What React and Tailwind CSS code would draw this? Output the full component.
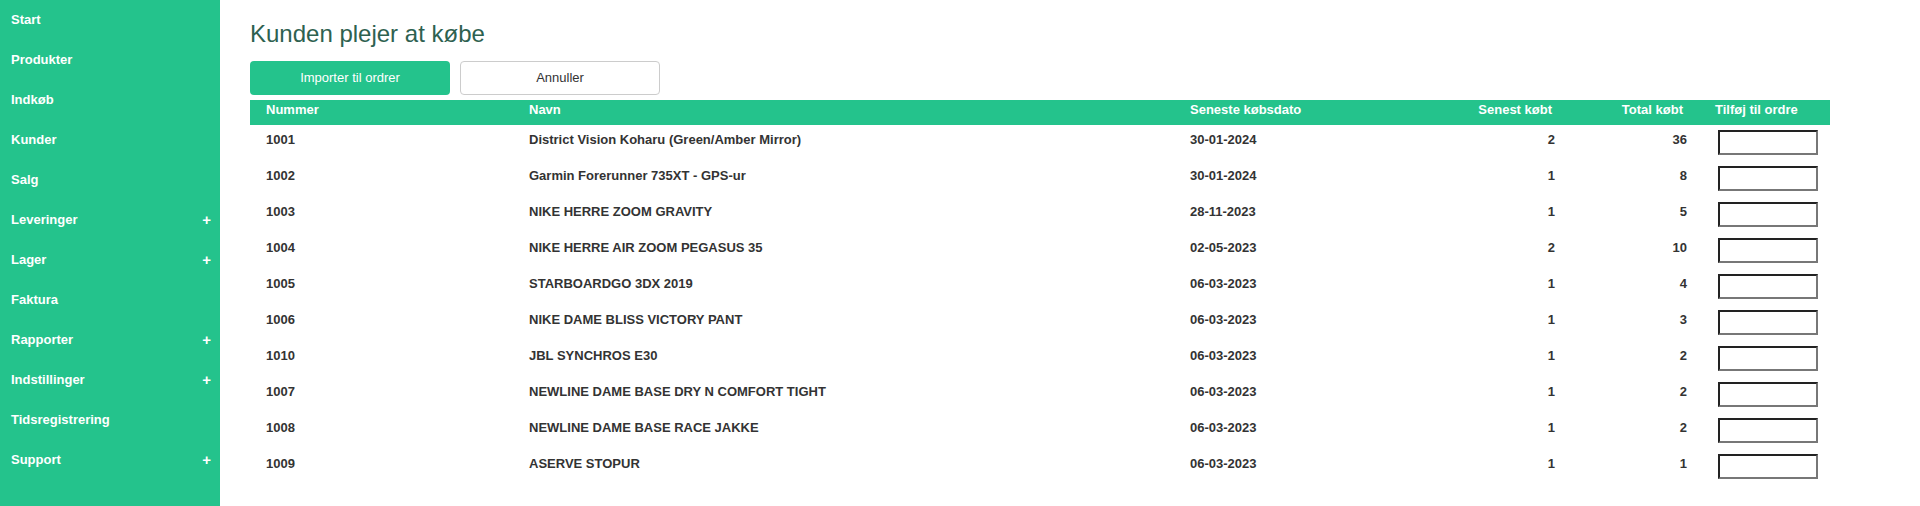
import React from "react";

const menu = [
  { label: "Start" },
  { label: "Produkter" },
  { label: "Indkøb" },
  { label: "Kunder" },
  { label: "Salg" },
  { label: "Leveringer", sub: true },
  { label: "Lager", sub: true },
  { label: "Faktura" },
  { label: "Rapporter", sub: true },
  { label: "Indstillinger", sub: true },
  { label: "Tidsregistrering" },
  { label: "Support", sub: true },
];

const rows = [
  ["1001", "District Vision Koharu (Green/Amber Mirror)", "30-01-2024", 2, 36],
  ["1002", "Garmin Forerunner 735XT - GPS-ur", "30-01-2024", 1, 8],
  ["1003", "NIKE HERRE ZOOM GRAVITY", "28-11-2023", 1, 5],
  ["1004", "NIKE HERRE AIR ZOOM PEGASUS 35", "02-05-2023", 2, 10],
  ["1005", "STARBOARDGO 3DX 2019", "06-03-2023", 1, 4],
  ["1006", "NIKE DAME BLISS VICTORY PANT", "06-03-2023", 1, 3],
  ["1010", "JBL SYNCHROS E30", "06-03-2023", 1, 2],
  ["1007", "NEWLINE DAME BASE DRY N COMFORT TIGHT", "06-03-2023", 1, 2],
  ["1008", "NEWLINE DAME BASE RACE JAKKE", "06-03-2023", 1, 2],
  ["1009", "ASERVE STOPUR", "06-03-2023", 1, 1],
];

const cols = "grid grid-cols-[263px_661px_226px_171px_128px_131px]";

const App = () => {
  return (
    <div className="flex min-h-[506px] bg-white font-['Liberation_Sans',Arial,sans-serif]">
      <aside className="w-[220px] shrink-0 bg-[#24c38c]">
        {menu.map((item) => (
          <div
            key={item.label}
            className="flex h-10 items-center justify-between pb-[2px] pl-[11px] pr-[9px] text-[13px] leading-[15px] font-bold text-white"
          >
            <span>{item.label}</span>
            {item.sub && <span className="text-[15px]">+</span>}
          </div>
        ))}
      </aside>

      <main className="flex-1 pl-[30px]">
        <h1 className="mt-[22px] text-[24px] leading-[24px] text-[#2e6150]">Kunden plejer at købe</h1>

        <div className="mt-[15px] flex gap-[10px]">
          <button className="h-[34px] w-[200px] rounded bg-[#24c38c] text-[13px] text-white">
            Importer til ordrer
          </button>
          <button className="h-[34px] w-[200px] rounded border border-[#cccccc] bg-white text-[13px] text-[#333]">
            Annuller
          </button>
        </div>

        <div className="mt-[5px] w-[1580px]">
          <div className={`${cols} h-[25px] bg-[#24c38c] pt-[2px] text-[13px] leading-[15px] font-bold text-white`}>
            <div className="pl-4">Nummer</div>
            <div className="pl-4">Navn</div>
            <div className="pl-4">Seneste købsdato</div>
            <div className="pr-[19px] text-right">Senest købt</div>
            <div className="pr-4 text-right">Total købt</div>
            <div className="pl-4">Tilføj til ordre</div>
          </div>

          {rows.map((r) => (
            <div key={r[0]} className={`${cols} h-9 text-[13px] leading-[15px] font-bold text-[#333]`}>
              <div className="pl-4 pt-[7px]">{r[0]}</div>
              <div className="pl-4 pt-[7px]">{r[1]}</div>
              <div className="pl-4 pt-[7px]">{r[2]}</div>
              <div className="pr-4 pt-[7px] text-right">{r[3]}</div>
              <div className="pr-3 pt-[7px] text-right">{r[4]}</div>
              <div className="pl-[19px] pt-[5px]">
                <input
                  type="text"
                  className="h-[25px] w-[100px] border-2 border-t-[#222] border-l-[#222] border-r-[#777] border-b-[#777] bg-white outline-none"
                />
              </div>
            </div>
          ))}
        </div>
      </main>
    </div>
  );
};

export default App;
